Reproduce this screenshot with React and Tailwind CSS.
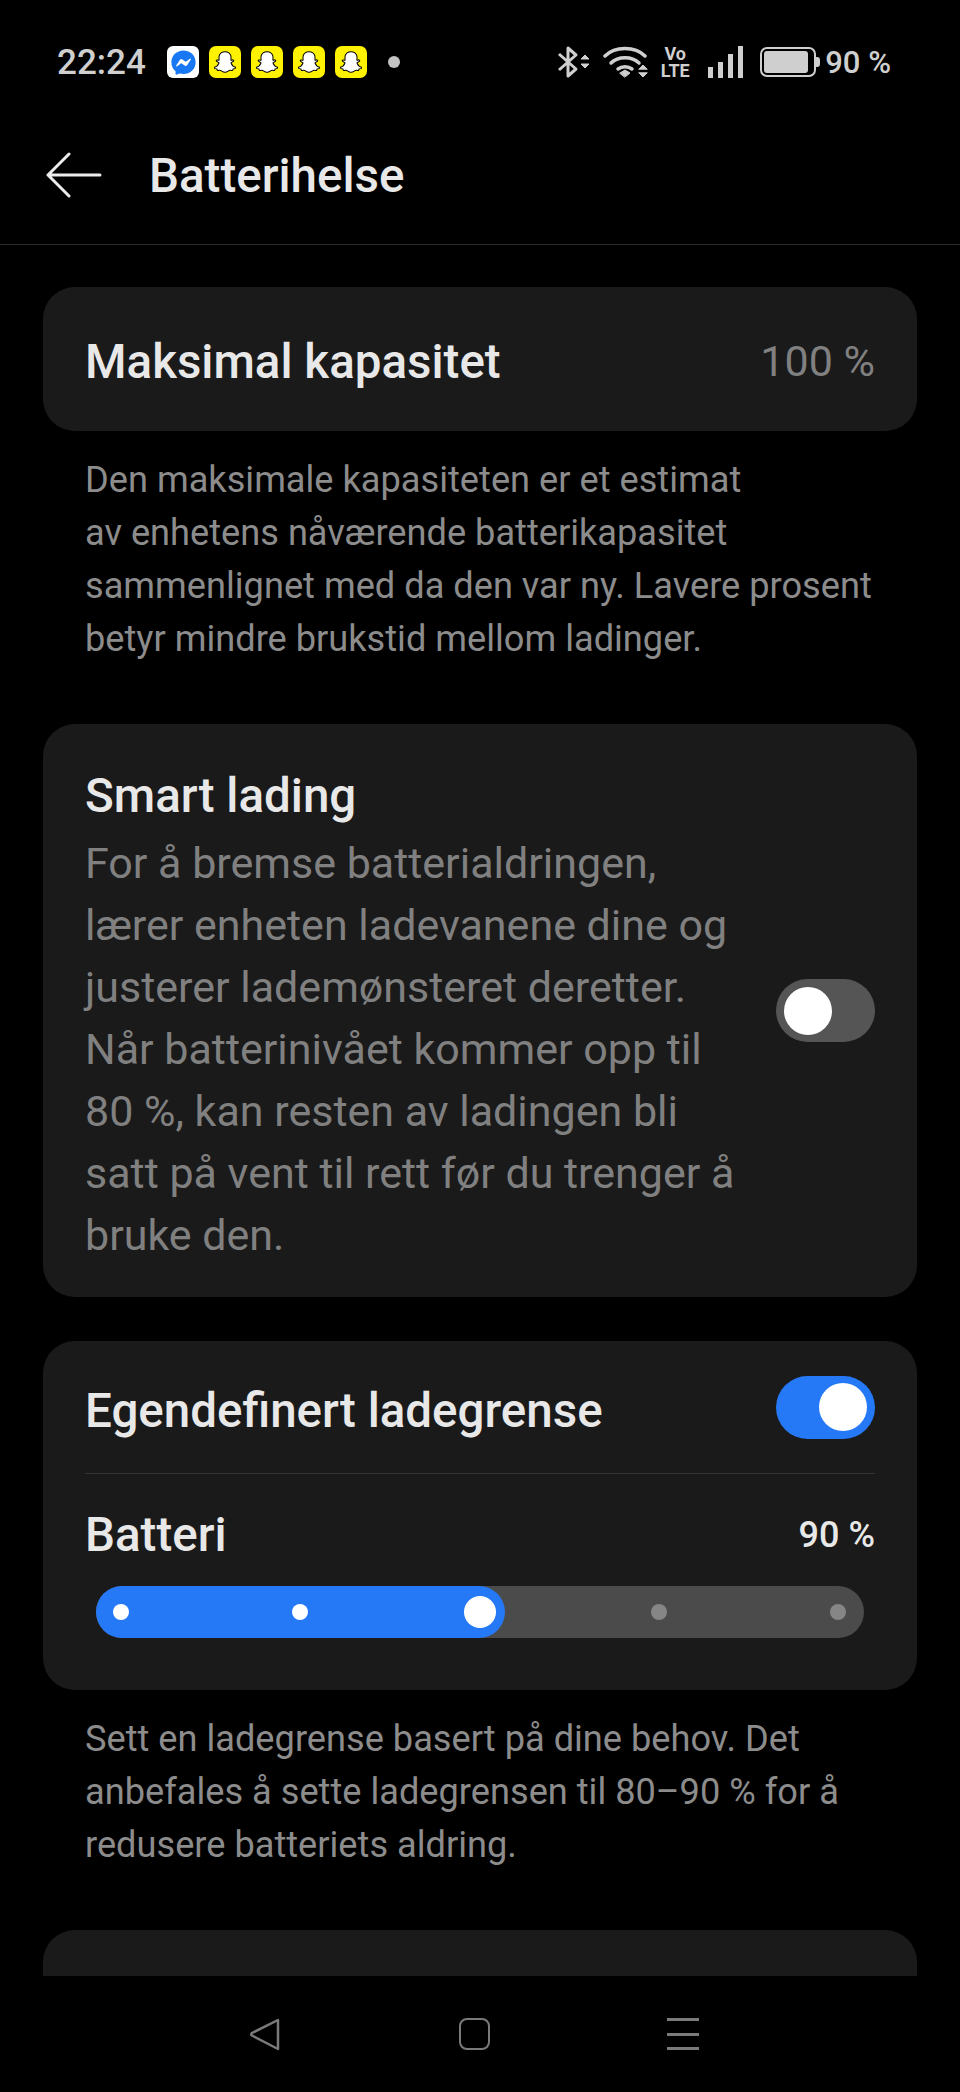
import React from 'react';
import { FaSnapchatGhost, FaFacebookMessenger } from 'react-icons/fa';

const font = { fontFamily: 'Roboto, sans-serif' };

function SnapIcon() {
  return (
    <div className="flex h-8 w-8 items-center justify-center rounded-[7px] bg-[#fff200]">
      <FaSnapchatGhost className="h-[22px] w-[22px] text-white" stroke="#000" strokeWidth="24" />
    </div>
  );
}

function StatusBar() {
  return (
    <div className="flex h-[124px] items-center pl-[57px] pr-[69px] text-[#cfcfcf]">
      <span className="w-[110px] text-[35px] font-medium leading-none">22:24</span>
      <div className="flex h-8 w-8 items-center justify-center rounded-[6px] bg-white">
        <FaFacebookMessenger className="h-[25px] w-[25px] text-[#1877f2]" />
      </div>
      <div className="ml-[10px] flex gap-[10px]">
        <SnapIcon />
        <SnapIcon />
        <SnapIcon />
        <SnapIcon />
      </div>
      <div className="ml-[21px] h-3 w-3 rounded-full bg-[#c4c4c4]" />

      <div className="ml-auto flex items-center">
        <svg className="-ml-[4px]" width="34" height="34" viewBox="0 0 34 34" fill="none" stroke="#cfcfcf" strokeWidth="3">
          <path d="M2 9l17 15-8 7V3l8 7L2 25" strokeLinejoin="round" />
          <path d="M24 14l4-4 4 4zM24 19l4 4 4-4z" fill="#cfcfcf" strokeWidth="1" />
        </svg>
        <svg className="ml-[12px]" width="46" height="34" viewBox="0 0 46 34" fill="none" stroke="#cfcfcf" strokeLinecap="round">
          <path d="M2 11C12 1 32 1 42 11" strokeWidth="3.5" />
          <path d="M8 18c7-7 21-7 28 0" strokeWidth="3.5" />
          <path d="M15 24c4-3 10-3 14 0" strokeWidth="3.5" />
          <path d="M17 28l5-3 5 3-5 4z" fill="#cfcfcf" strokeWidth="1" />
          <path d="M36 24l4-4 4 4zM36 28l4 4 4-4z" fill="#cfcfcf" strokeWidth="1" />
        </svg>
        <div className="ml-[10px] flex w-[32px] flex-col items-center text-[18px] font-bold leading-[17px]">
          <span>Vo</span>
          <span>LTE</span>
        </div>
        <div className="ml-[17px] flex h-8 items-end gap-[5px]">
          <div className="h-[11px] w-[5px] bg-[#cfcfcf]" />
          <div className="h-[16px] w-[5px] bg-[#cfcfcf]" />
          <div className="h-[24px] w-[5px] bg-[#cfcfcf]" />
          <div className="h-[32px] w-[5px] bg-[#cfcfcf]" />
        </div>
        <div className="ml-[17px] flex items-center">
          <div className="h-[30px] w-[56px] rounded-[7px] border-2 border-[#cfcfcf] p-[2px]">
            <div className="h-full w-[44px] rounded-[3px] bg-[#cfcfcf]" />
          </div>
          <div className="h-[10px] w-[4px] rounded-r-[3px] bg-[#cfcfcf]" />
        </div>
        <span className="ml-[5px] text-[31px] font-medium leading-none">90 %</span>
      </div>
    </div>
  );
}

function Header() {
  return (
    <div className="flex h-[121px] items-start border-b border-[#2a2a2a] pl-[46px]">
      <svg className="mt-[28px]" width="56" height="46" viewBox="0 0 56 46" fill="none" stroke="#ececec" strokeWidth="3" strokeLinecap="round" strokeLinejoin="round">
        <path d="M54 23H2M23 2L2 23l21 21" />
      </svg>
      <h1 className="ml-[47px] mt-[26px] text-[47.5px] font-medium leading-[52px] text-[#e8e8e8]">Batterihelse</h1>
    </div>
  );
}

function Toggle({ on }) {
  return (
    <div className={`flex h-[63px] w-[99px] shrink-0 items-center rounded-full px-2 ${on ? 'justify-end bg-[#2579f7]' : 'justify-start bg-[#555555]'}`}>
      <div className="h-12 w-12 rounded-full bg-white" />
    </div>
  );
}

function Note({ className, children }) {
  return <p className={`px-[42px] text-[36.2px] leading-[53px] text-[#8c8c8c] ${className}`}>{children}</p>;
}

function Stop({ active, thumb }) {
  return (
    <div className={`relative h-4 w-4 rounded-full ${active ? 'bg-white' : 'bg-[#868686]'}`}>
      {thumb && <div className="absolute -left-2 -top-2 h-8 w-8 rounded-full bg-white" />}
    </div>
  );
}

function Slider() {
  return (
    <div className="relative mx-[11px] h-[52px] rounded-full bg-[#4b4b4b]">
      <div className="absolute bottom-0 left-0 top-0 w-[409px] rounded-full bg-[#2579f7]" />
      <div className="relative flex h-full items-center justify-between pl-[17px] pr-[18px]">
        <Stop active />
        <Stop active />
        <Stop active thumb />
        <Stop />
        <Stop />
      </div>
    </div>
  );
}

function NavBar() {
  return (
    <div className="flex h-[116px] shrink-0 items-start justify-center bg-black pr-[13px] pt-[42px]">
      <svg width="32" height="33" viewBox="0 0 32 33" fill="none" stroke="#7a7a7a" strokeWidth="2.5" strokeLinejoin="round">
        <path d="M29 2v29L3 17.5q-1.500-1 0-2.500z" />
      </svg>
      <div className="ml-[178px] h-[32px] w-[31px] rounded-[8px] border-[2.5px] border-[#7a7a7a]" />
      <div className="ml-[177px] flex h-[32px] w-[32px] flex-col justify-between">
        <div className="h-[3px] bg-[#7a7a7a]" />
        <div className="h-[3px] bg-[#7a7a7a]" />
        <div className="h-[3px] bg-[#7a7a7a]" />
      </div>
    </div>
  );
}

export default function App() {
  return (
    <div className="flex h-[2092px] w-[960px] flex-col overflow-hidden bg-black" style={font}>
      <StatusBar />
      <Header />

      <div className="min-h-0 flex-1 overflow-hidden px-[43px] pt-[42px]">
        <div className="flex h-[144px] items-center justify-between rounded-[32px] bg-[#1a1a1a] px-[42px]">
          <span className="pt-[5px] text-[47.5px] font-medium leading-[56px] text-[#e8e8e8]">Maksimal kapasitet</span>
          <span className="pt-[4px] text-[43px] leading-[52px] text-[#808080]">100 %</span>
        </div>
        <Note className="mt-[22px]">
          Den maksimale kapasiteten er et estimat<br />
          av enhetens nåværende batterikapasitet<br />
          sammenlignet med da den var ny. Lavere prosent<br />
          betyr mindre brukstid mellom ladinger.
        </Note>

        <div className="mt-[59px] flex items-center justify-between rounded-[32px] bg-[#1a1a1a] px-[42px]">
          <div className="pb-[31px] pt-[44px]">
            <h2 className="text-[47.5px] font-medium leading-[56px] text-[#e8e8e8]">Smart lading</h2>
            <p className="mt-[8px] text-[43px] leading-[62px] text-[#808080]">
              For å bremse batterialdringen,<br />
              lærer enheten ladevanene dine og<br />
              justerer lademønsteret deretter.<br />
              Når batterinivået kommer opp til<br />
              80 %, kan resten av ladingen bli<br />
              satt på vent til rett før du trenger å<br />
              bruke den.
            </p>
          </div>
          <Toggle />
        </div>

        <div className="mt-[44px] h-[349px] rounded-[32px] bg-[#1a1a1a] px-[42px]">
          <div className="flex h-[133px] items-center justify-between border-b border-[#333333]">
            <span className="pt-[8px] text-[47.5px] font-medium leading-[56px] text-[#e8e8e8]">Egendefinert ladegrense</span>
            <Toggle on />
          </div>
          <div className="mt-[35px] flex h-[52px] items-center justify-between">
            <span className="text-[47.5px] font-medium leading-[52px] text-[#e8e8e8]">Batteri</span>
            <span className="text-[36px] font-medium leading-[44px] text-[#e8e8e8]">90 %</span>
          </div>
          <div className="mt-[25px]">
            <Slider />
          </div>
        </div>
        <Note className="mt-[22px]">
          Sett en ladegrense basert på dine behov. Det<br />
          anbefales å sette ladegrensen til 80–90 % for å<br />
          redusere batteriets aldring.
        </Note>

        <div className="mt-[59px] h-[200px] rounded-[32px] bg-[#1a1a1a]" />
      </div>

      <NavBar />
    </div>
  );
}
